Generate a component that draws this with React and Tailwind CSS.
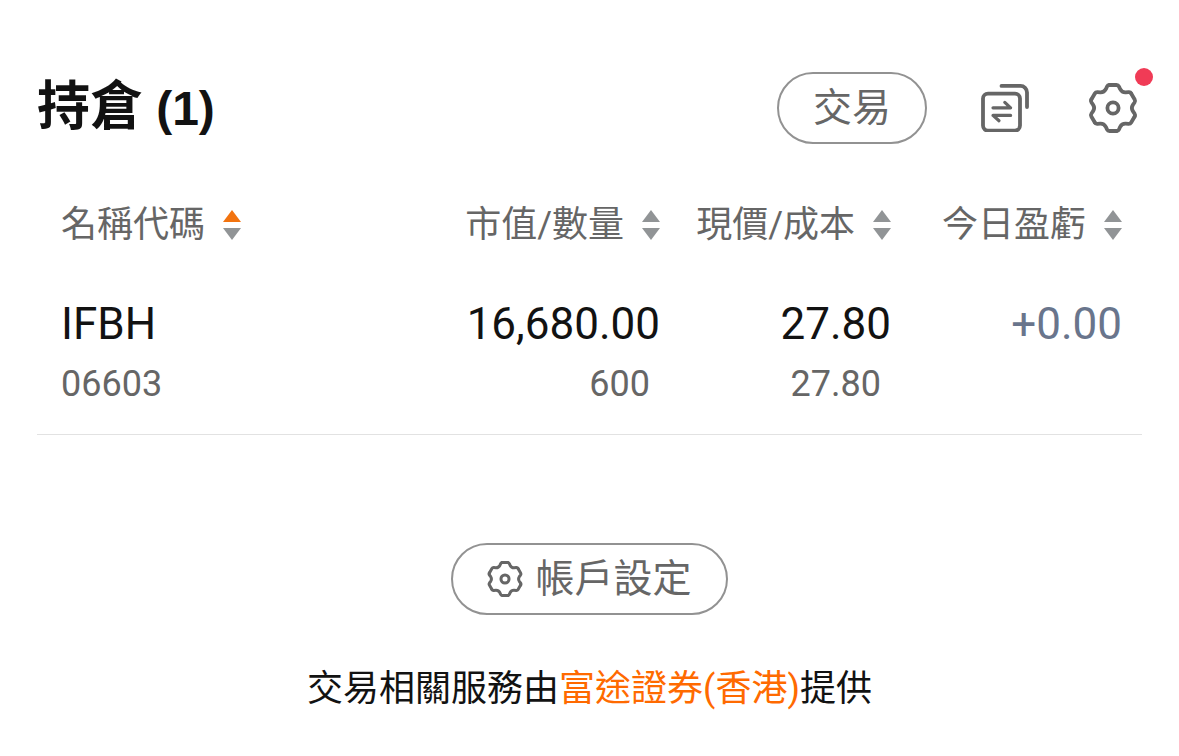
const HOLDINGS = [
  {
    name: "IFBH",
    code: "06603",
    value: "16,680.00",
    quantity: "600",
    price: "27.80",
    cost: "27.80",
    today: "+0.00",
  },
];

const COLUMNS = [
  { label: "名稱代碼", width: "", align: "justify-start", sort: "asc" },
  { label: "市值/數量", width: "w-[231px]", align: "justify-end" },
  { label: "現價/成本", width: "w-[231px]", align: "justify-end" },
  { label: "今日盈虧", width: "w-[251px] pr-5", align: "justify-end" },
];

const TEETH = [0, 60, 120, 180, 240, 300];

function GearIcon({ className, stroke }) {
  return (
    <svg
      viewBox="-25 -25 50 50"
      className={className}
      fill="none"
      stroke="currentColor"
      strokeWidth={stroke}
      strokeLinecap="round"
      strokeLinejoin="round"
      aria-hidden="true"
    >
      {TEETH.map((deg) => (
        <path
          key={deg}
          transform={`rotate(${deg})`}
          d="M-3.5-23H3.5Q5.2-23 6-21.4L7.2-18.8C8.2-16.9 10.5-15.5 12.7-15.6L15.6-15.9Q17.4-16.1 18.2-14.5"
        />
      ))}
      <circle r="5.6" />
    </svg>
  );
}

function OrdersIcon() {
  return (
    <svg
      viewBox="0 0 48 48"
      className="size-12"
      fill="none"
      stroke="currentColor"
      strokeWidth="3.8"
      strokeLinecap="round"
      strokeLinejoin="round"
      aria-hidden="true"
    >
      <rect x="2" y="9.6" width="37" height="37" rx="5" />
      <path d="M20.5 1.9H39.5a6.5 6.5 0 0 1 6.5 6.5V23" />
      <path strokeWidth="3.2" d="M12 23.8H29.6L23.8 18.4M29.6 31.4H12L18 36.8" />
    </svg>
  );
}

function SortIcon({ sort }) {
  return (
    <svg viewBox="0 0 18 30" className="h-[30px] w-[18px]" aria-hidden="true">
      <path d="M9 0L18 12H0Z" fill={sort === "asc" ? "#f2730f" : "#919496"} />
      <path d="M9 30L18 18H0Z" fill="#919496" />
    </svg>
  );
}

export default function App() {
  return (
    <main className="bg-white px-[37px] pt-[72px] pb-11 font-[Roboto,'Noto_Sans_CJK_TC',sans-serif] text-[#121212]">
      <header className="flex h-[72px] items-center justify-between pr-1">
        <h1 className="text-[53px] leading-[72px] font-bold">
          持倉 <span className="font-['Liberation_Sans',sans-serif] text-[48px]">(1)</span>
        </h1>

        <div className="flex items-center gap-[54px] text-[#666]">
          <button className="h-[72px] rounded-full border-2 border-[#929292] px-[34px] text-[39px] leading-none">
            交易
          </button>
          <div className="flex items-center gap-[59px]">
            <button aria-label="訂單">
              <OrdersIcon />
            </button>
            <button aria-label="設定" className="relative">
              <GearIcon className="size-[50px]" stroke={3.8} />
              <span className="absolute -top-[15px] -right-[15px] size-[18px] rounded-full bg-[#f03b56]" />
            </button>
          </div>
        </div>
      </header>

      <table className="mt-[57px] w-full table-fixed border-b border-[#e2e2e2]">
        <thead>
          <tr>
            {COLUMNS.map((col) => (
              <th key={col.label} className={`p-0 font-normal first:pl-6 ${col.width}`}>
                <button
                  className={`flex h-12 w-full items-center gap-[18px] text-[36px] leading-none whitespace-nowrap text-[#666] ${col.align}`}
                >
                  {col.label}
                  <SortIcon sort={col.sort} />
                </button>
              </th>
            ))}
          </tr>
        </thead>
        <tbody>
          {HOLDINGS.map((h) => (
            <tr key={h.code} className="text-right text-[44px] leading-[60px]">
              <td className="pt-[45px] pb-5 pl-6 text-left">
                <div>{h.name}</div>
                <div className="text-[36px] text-[#666]">{h.code}</div>
              </td>
              <td className="pt-[45px] pb-5">
                <div>{h.value}</div>
                <div className="pr-2.5 text-[36px] text-[#666]">{h.quantity}</div>
              </td>
              <td className="pt-[45px] pb-5">
                <div>{h.price}</div>
                <div className="pr-2.5 text-[36px] text-[#666]">{h.cost}</div>
              </td>
              <td className="pt-[45px] pr-5 pb-5 align-top text-[#69758c]">{h.today}</td>
            </tr>
          ))}
        </tbody>
      </table>

      <div className="mt-[108px] flex justify-center">
        <button className="flex h-[72px] items-center gap-3 rounded-full border-2 border-[#929292] px-[34px] text-[39px] leading-none text-[#666]">
          <GearIcon className="size-9" stroke={4.2} />
          帳戶設定
        </button>
      </div>

      <p className="mt-[50px] text-center text-[36px] leading-[48px]">
        交易相關服務由
        <a href="#futu" className="text-[#ff6a00]">
          富途證券(香港)
        </a>
        提供
      </p>
    </main>
  );
}
